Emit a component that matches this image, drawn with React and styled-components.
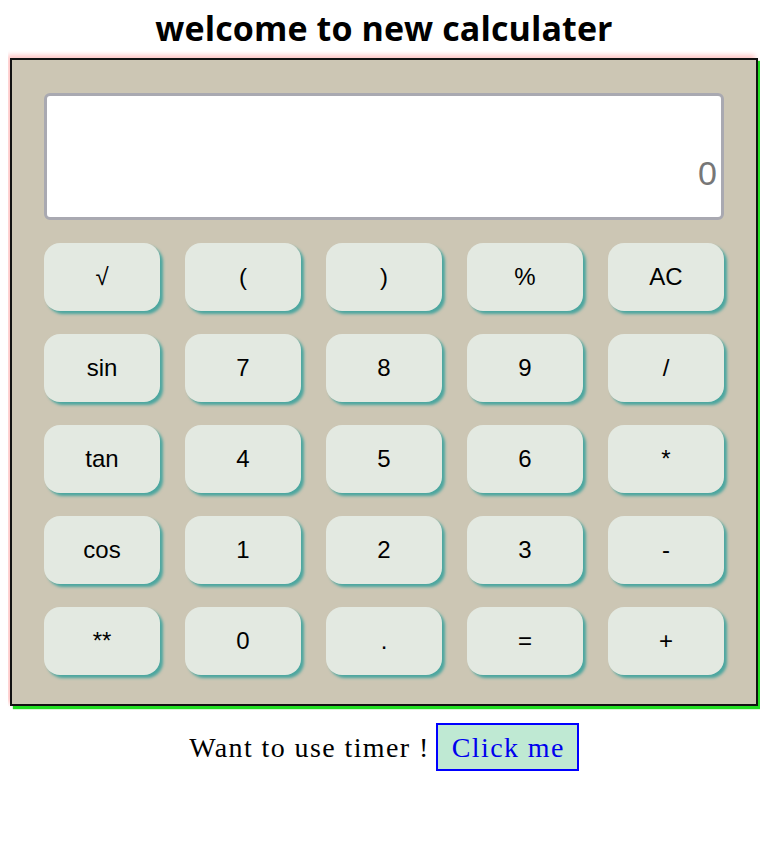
import React, { useState } from "react";
import styled, { createGlobalStyle } from "styled-components";

const GlobalStyle = createGlobalStyle`
  body {
    margin: 8px;
    background: #ffffff;
    font-family: "Liberation Serif", serif;
  }
`;

const Page = styled.div`
  display: flex;
  flex-direction: column;
  align-items: center;
`;

const Title = styled.h1`
  font-family: "Open Sans", sans-serif;
  font-size: 34px;
  font-weight: 700;
  letter-spacing: 0.1px;
  margin: 0 0 10px;
  line-height: 40px;
  color: #000;
`;

const Calculator = styled.div`
  width: 680px;
  padding: 33px 32px 29px;
  background: #ccc6b4;
  border: 2px solid #111;
  box-shadow: 3px 3px 1px #22dd22, -3px -3px 5px #ffc4c4;
`;

const Display = styled.div`
  box-sizing: border-box;
  height: 127px;
  border: 3px solid #a9a9b1;
  border-radius: 6px;
  background: #ffffff;
  display: flex;
  align-items: flex-end;
  justify-content: flex-end;
  padding: 0 4px 24px 0;
  font-family: "Liberation Sans", Arial, sans-serif;
  font-size: 34px;
  color: #777;
`;

const Keys = styled.div`
  display: grid;
  grid-template-columns: repeat(5, 116px);
  grid-auto-rows: 68px;
  column-gap: 25px;
  row-gap: 23px;
  margin-top: 23px;
`;

const Key = styled.button`
  border: none;
  border-radius: 16px;
  background: #e3e9e1;
  box-shadow: 3px 3px 3px #4ba69f;
  font-family: "Liberation Sans", Arial, sans-serif;
  font-size: 24px;
  color: #000;
  padding: 0;
  cursor: pointer;
`;

const Footer = styled.div`
  display: flex;
  align-items: baseline;
  gap: 6px;
  margin-top: 17px;
  font-family: "Liberation Serif", serif;
  font-size: 28px;
  letter-spacing: 1.4px;
  color: #000;
`;

const TimerBtn = styled.button`
  box-sizing: border-box;
  font-family: "Liberation Serif", serif;
  font-size: 28px;
  letter-spacing: 1.4px;
  line-height: 1;
  color: #0000ee;
  background: #bfe9d3;
  border: 2px solid #0000ff;
  height: 48px;
  padding: 9px 12px 0 14px;
  display: inline-flex;
  align-items: flex-start;
`;

const keys = [
  "√", "(", ")", "%", "AC",
  "sin", "7", "8", "9", "/",
  "tan", "4", "5", "6", "*",
  "cos", "1", "2", "3", "-",
  "**", "0", ".", "=", "+",
];

export default function App() {
  const [value] = useState("0");
  return (
    <Page>
      <GlobalStyle />
      <Title>welcome to new calculater</Title>
      <Calculator>
        <Display>{value}</Display>
        <Keys>
          {keys.map((k) => (
            <Key key={k}>{k}</Key>
          ))}
        </Keys>
      </Calculator>
      <Footer>
        Want to use timer !
        <TimerBtn>Click me</TimerBtn>
      </Footer>
    </Page>
  );
}
